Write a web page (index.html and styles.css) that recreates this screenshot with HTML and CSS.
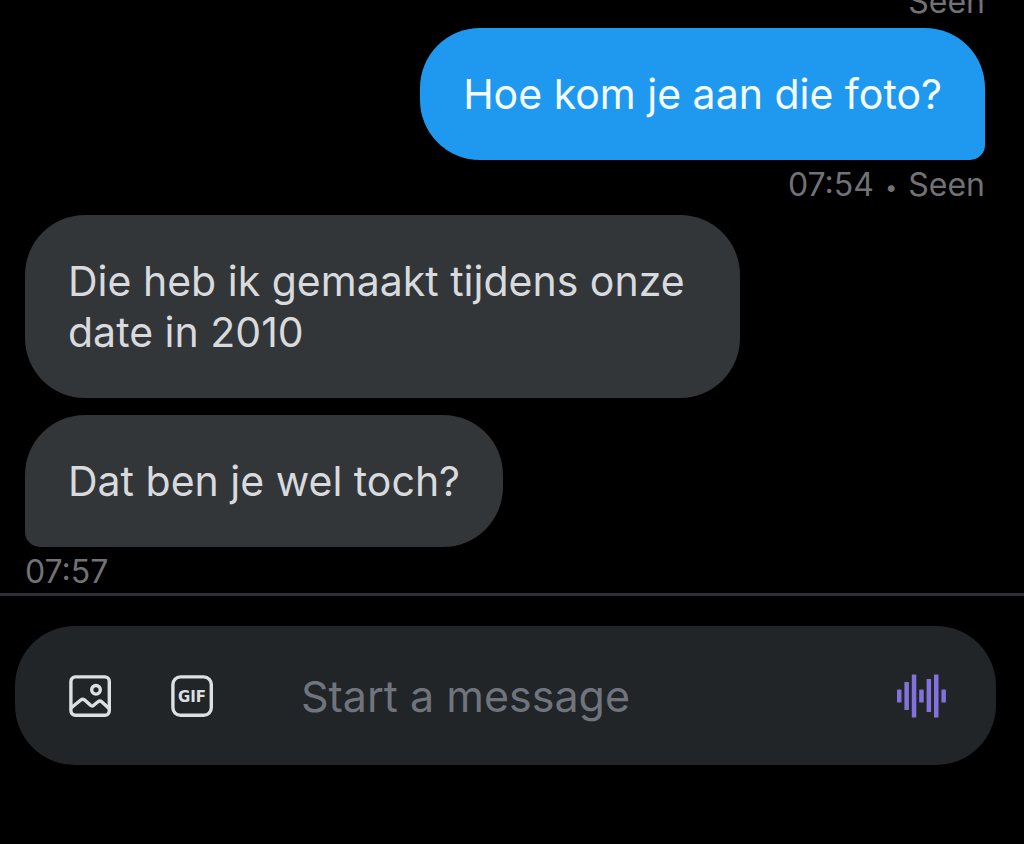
FILE: index.html
```
<!DOCTYPE html>
<html lang="nl">
<head>
  <meta charset="UTF-8">
  <meta name="viewport" content="width=device-width, initial-scale=1">
  <title>Messages</title>
  <link rel="stylesheet" href="styles.css">
</head>
<body>
  <!-- Conversation, newest message at the bottom -->
  <main class="conversation">
    <div class="group sent">
      <p class="meta">Seen</p>
      <p class="bubble last">Hoe kom je aan die foto?</p>
      <p class="meta">07:54 <span class="dot">•</span> Seen</p>
    </div>

    <div class="group received">
      <p class="bubble">Die heb ik gemaakt tijdens onze date in 2010</p>
      <p class="bubble last">Dat ben je wel toch?</p>
      <p class="meta">07:57</p>
    </div>
  </main>

  <!-- Message composer -->
  <footer class="footer">
    <form class="composer">
      <button type="button" class="icon-button" aria-label="Add photo">
        <svg width="42" height="42" viewBox="0 0 42 42" fill="none" stroke="currentColor" stroke-width="3.4">
          <rect x="1.9" y="1.9" width="38.4" height="38.4" rx="4.5"/>
          <circle cx="27" cy="14.8" r="4.3"/>
          <path d="M2 33 L11.5 25.3 Q14 23.2 16.3 25.5 L21.5 30.3 Q23 31.6 24.7 30.3 L29 26.8 Q31 25.3 33 27 L40 33.5" stroke-linejoin="round"/>
        </svg>
      </button>
      <button type="button" class="icon-button" aria-label="Add GIF">
        <svg width="42" height="42" viewBox="0 0 42 42">
          <rect x="1.9" y="1.9" width="38.4" height="38.4" rx="7.5" fill="none" stroke="currentColor" stroke-width="3.4"/>
          <text class="gif-label" x="21" y="27" text-anchor="middle">GIF</text>
        </svg>
      </button>
      <input class="message-input" type="text" placeholder="Start a message" aria-label="Start a message">
      <button type="button" class="icon-button voice" aria-label="Record voice message">
        <svg width="50" height="44" viewBox="0 0 50 44" fill="currentColor">
          <rect x="0" y="15.5" width="4.5" height="13" rx="0.6"/>
          <rect x="7.4" y="8" width="4.5" height="28" rx="0.6"/>
          <rect x="14.8" y="0.5" width="4.5" height="43" rx="0.6"/>
          <rect x="22.2" y="15.5" width="4.5" height="13" rx="0.6"/>
          <rect x="29.6" y="5" width="4.5" height="33" rx="0.6"/>
          <rect x="37" y="0.5" width="4.5" height="43" rx="0.6"/>
          <rect x="44.4" y="15.5" width="4.5" height="13" rx="0.6"/>
        </svg>
      </button>
    </form>
  </footer>
</body>
</html>
```
FILE: styles.css
```
* {
  box-sizing: border-box;
}

body {
  margin: 0;
  height: 100vh;
  display: flex;
  flex-direction: column;
  background: #000;
  font-family: Inter, "Liberation Sans", sans-serif;
}

/* Messages stick to the bottom, older ones run off the top */
.conversation {
  flex: 1;
  min-height: 0;
  overflow: hidden;
  display: flex;
  flex-direction: column;
  justify-content: flex-end;
  gap: 9px;
  padding: 0 39px 0 25px;
}

.group {
  flex-shrink: 0;
  display: flex;
  flex-direction: column;
  align-items: flex-start;
}

.sent {
  align-items: flex-end;
}

.bubble {
  margin: 0;
  max-width: 715px;
  padding: 41px 43px 40px;
  border-radius: 60px;
  font-size: 41px;
  line-height: 51px;
}

.bubble + .bubble {
  margin-top: 17px;
}

.meta + .bubble {
  margin-top: 5px;
}

.sent .bubble {
  background: #1f99f0;
  color: #f4fcff;
}

.sent .last {
  border-bottom-right-radius: 15px;
}

.received .bubble {
  background: #323639;
  color: #d8dadd;
}

.received .last {
  border-bottom-left-radius: 15px;
}

.meta {
  margin: 0;
  padding-top: 4px;
  font-size: 32px;
  line-height: 42px;
  color: #727276;
}

.dot {
  padding: 0 2px;
  font-size: 22px;
  line-height: 1;
  vertical-align: middle;
}

.footer {
  padding: 30px 28px 79px 15px;
  border-top: 3px solid #2f3036;
}

.composer {
  display: flex;
  align-items: center;
  gap: 60px;
  height: 139px;
  padding: 0 49px 0 54px;
  border-radius: 60px;
  background: #212528;
}

.icon-button {
  flex-shrink: 0;
  display: flex;
  padding: 0;
  border: 0;
  background: none;
  color: #dddfe2;
  cursor: pointer;
}

.voice {
  color: #8371dc;
}

.gif-label {
  fill: currentColor;
  font-family: "DejaVu Sans", sans-serif;
  font-size: 15px;
  font-weight: 700;
}

.message-input {
  flex: 1;
  min-width: 0;
  height: 60px;
  padding: 0 0 0 28px;
  border: 0;
  outline: 0;
  background: none;
  font: inherit;
  font-size: 43px;
  color: #d8dadd;
}

.message-input::placeholder {
  color: #70747c;
  opacity: 1;
}
```
